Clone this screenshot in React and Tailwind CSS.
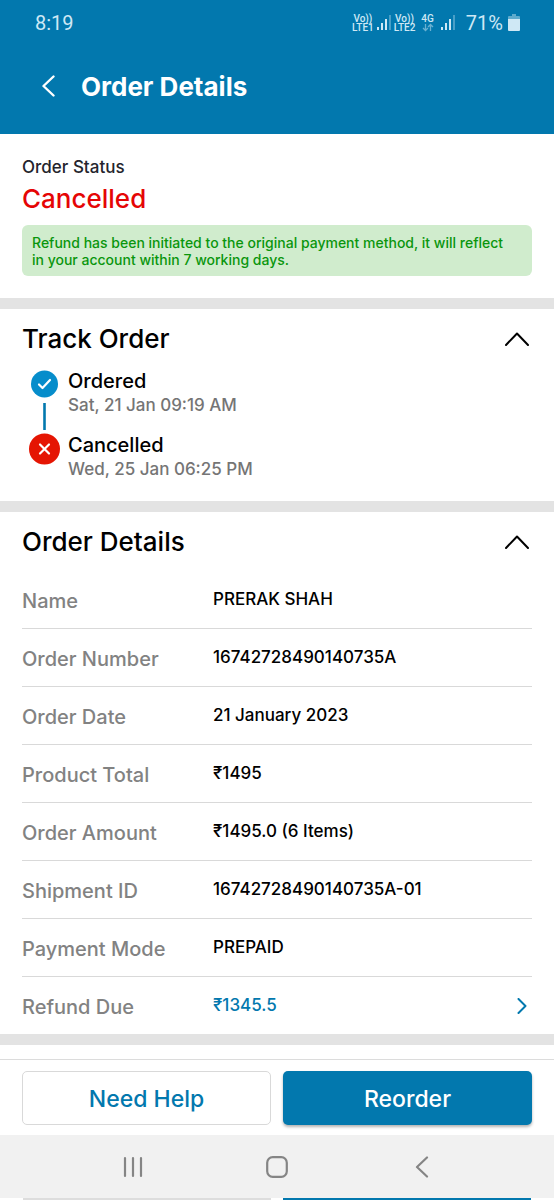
import { useState } from "react";

const details = [
  { label: "Name", value: "PRERAK SHAH" },
  { label: "Order Number", value: "16742728490140735A" },
  { label: "Order Date", value: "21 January 2023" },
  { label: "Product Total", value: "₹1495" },
  { label: "Order Amount", value: "₹1495.0 (6 Items)" },
  { label: "Shipment ID", value: "16742728490140735A-01" },
  { label: "Payment Mode", value: "PREPAID" },
];

function SignalBars() {
  return (
    <svg width="14" height="16" viewBox="0 0 14 16" aria-hidden="true" fill="#cfe8f5">
      <rect x="0" y="12" width="2" height="3" />
      <rect x="4" y="8" width="2" height="7" />
      <rect x="8" y="4" width="2" height="11" />
      <rect x="12" y="0" width="2" height="15" opacity="0.35" />
    </svg>
  );
}

function Volte({ line }) {
  return (
    <div className="flex flex-col items-center text-[10px] leading-[9px] font-medium">
      <span>Vo))</span>
      <span>{line}</span>
    </div>
  );
}

function StatusBar() {
  return (
    <div className="flex h-[46px] items-center justify-between pr-[34px] pl-[35px] font-['Roboto',sans-serif] text-[#cfe8f5]">
      <span className="text-xl">8:19</span>
      <div className="flex items-center">
        <Volte line="LTE1" />
        <span className="ml-[3px]"><SignalBars /></span>
        <span className="ml-[3px]"><Volte line="LTE2" /></span>
        <div className="ml-1.5 flex flex-col items-center text-[10px] leading-[9px] font-medium">
          <span>4G</span>
          <svg width="12" height="9" viewBox="0 0 12 9" aria-hidden="true" fill="none" stroke="#cfe8f5" strokeWidth="1.3" opacity="0.5">
            <path d="M3.5 1v6M1 5l2.5 2.5L6 5M8.5 8V2M6 4l2.5-2.5L11 4" />
          </svg>
        </div>
        <span className="ml-[7px]"><SignalBars /></span>
        <span className="ml-[11px] text-xl">71%</span>
        <svg className="ml-[5px]" width="12" height="18" viewBox="0 0 12 18" aria-hidden="true" fill="#cfe8f5">
          <path d="M4 0h4v2h3q1 0 1 1v3H0V3q0-1 1-1h3z" opacity="0.45" />
          <path d="M0 5h12v11q0 1-1 1H1q-1 0-1-1z" />
        </svg>
      </div>
    </div>
  );
}

function SectionHeading({ title, open, onToggle }) {
  return (
    <h2 className="text-[26px] leading-8 font-medium">
      <button type="button" aria-expanded={open} onClick={onToggle} className="flex w-full items-center justify-between pr-[3px] text-left">
        {title}
        <svg className={open ? "" : "rotate-180"} width="24" height="14" viewBox="0 0 24 14" aria-hidden="true" fill="none" stroke="currentColor" strokeWidth="2" strokeLinecap="round" strokeLinejoin="round">
          <path d="M1 13 12 1.5 23 13" />
        </svg>
      </button>
    </h2>
  );
}

function Step({ title, time, icon }) {
  return (
    <li className="flex gap-2">
      <div className="flex w-8 shrink-0 justify-center">{icon}</div>
      <div>
        <p className="text-xl leading-6 font-medium">{title}</p>
        <p className="text-[17px] leading-6 font-medium text-[#757575]">{time}</p>
      </div>
    </li>
  );
}

const rowClass = "grid w-full grid-cols-[191px_1fr] items-center text-left";
const labelClass = "pt-0.5 text-xl font-medium text-[#828282]";
const valueClass = "text-[17px] font-medium";

export default function App() {
  const [trackOpen, setTrackOpen] = useState(true);
  const [detailsOpen, setDetailsOpen] = useState(true);

  return (
    <div className="flex min-h-screen flex-col bg-white font-['Inter',sans-serif] text-black">
      <header className="bg-[#0278ae] pb-2 text-white">
        <StatusBar />
        <div className="flex h-20 items-center gap-[26px] px-[42px]">
          <button type="button" aria-label="Back">
            <svg width="13" height="22" viewBox="0 0 13 22" aria-hidden="true" fill="none" stroke="currentColor" strokeWidth="2.4" strokeLinecap="round" strokeLinejoin="round">
              <path d="M11.5 1.5 1.5 11l10 9.5" />
            </svg>
          </button>
          <h1 className="text-[26px] font-bold">Order Details</h1>
        </div>
      </header>

      <main className="flex-1">
        <section className="px-[22px] pt-[21px] pb-[22px]">
          <p className="text-[17px] leading-6 font-medium text-[#24242c]">Order Status</p>
          <p className="text-[26px] leading-10 font-medium text-[#e50505]">Cancelled</p>
          <p className="mt-[6px] rounded-[6px] bg-[#d0eccd] pt-[9px] pr-5 pb-2 pl-[10px] text-sm leading-[17px] font-medium text-[#0a960d]">
            Refund has been initiated to the original payment method, it will reflect in your account within 7 working days.
          </p>
        </section>

        <section className="border-t-[11px] border-[#e3e3e3] px-[22px] pt-[14px] pb-5">
          <SectionHeading title="Track Order" open={trackOpen} onToggle={() => setTrackOpen(!trackOpen)} />
          {trackOpen && (
            <ol className="flex flex-col gap-4 pt-[14px] pl-1.5">
              <Step
                title="Ordered"
                time="Sat, 21 Jan 09:19 AM"
                icon={
                  <svg className="-mb-4" width="32" height="64" viewBox="0 0 32 64" aria-hidden="true" fill="none">
                    <circle cx="16.5" cy="15" r="13.5" fill="#068dcb" />
                    <path d="m11 15.5 3.5 3.5 7.5-8" stroke="#fff" strokeWidth="2.2" strokeLinecap="round" strokeLinejoin="round" />
                    <path d="M16.5 34v27" stroke="#0278ae" strokeWidth="2.6" />
                  </svg>
                }
              />
              <Step
                title="Cancelled"
                time="Wed, 25 Jan 06:25 PM"
                icon={
                  <svg width="32" height="32" viewBox="0 0 32 32" aria-hidden="true" fill="none">
                    <circle cx="16.5" cy="16" r="15.5" fill="#e51503" />
                    <path d="m12 11.5 9 9m0-9-9 9" stroke="#fff" strokeWidth="2.2" strokeLinecap="round" />
                  </svg>
                }
              />
            </ol>
          )}
        </section>

        <section className="border-y-[11px] border-[#e3e3e3] px-[22px] pt-[14px]">
          <SectionHeading title="Order Details" open={detailsOpen} onToggle={() => setDetailsOpen(!detailsOpen)} />
          {detailsOpen && (
            <div className="pt-[13px]">
              <dl>
                {details.map(({ label, value }) => (
                  <div key={label} className={rowClass + " min-h-[58px] border-b border-[#d9d9d9]"}>
                    <dt className={labelClass}>{label}</dt>
                    <dd className={valueClass}>{value}</dd>
                  </div>
                ))}
              </dl>
              <button type="button" className={rowClass + " min-h-[57px] pr-[5px]"}>
                <span className={labelClass}>Refund Due</span>
                <span className="flex items-center justify-between text-[#0278ae]">
                  <span className={valueClass}>₹1345.5</span>
                  <svg width="10" height="16" viewBox="0 0 10 16" aria-hidden="true" fill="none" stroke="currentColor" strokeWidth="2" strokeLinecap="round" strokeLinejoin="round">
                    <path d="m1.5 1 7 7-7 7" />
                  </svg>
                </span>
              </button>
            </div>
          )}
        </section>
      </main>

      <footer>
        <div className="grid grid-cols-2 gap-3 border-t border-[#dcdcdc] px-[22px] pt-[11px] pb-[10px] text-[23px] font-medium">
          <button type="button" className="h-[54px] rounded-[5px] border border-[#d9d9d9] pt-0.5 text-[#0278ae]">Need Help</button>
          <button type="button" className="h-[54px] rounded-[5px] bg-[#0278ae] pt-0.5 text-white shadow-[0_2px_3px_rgba(0,0,0,0.3)]">Reorder</button>
        </div>
        <nav aria-label="System" className="flex h-[63px] items-center justify-between bg-[#f1f1f1] px-[122px] text-[#858585]">
          <button type="button" aria-label="Recent apps">
            <svg width="22" height="22" viewBox="0 0 22 22" aria-hidden="true" stroke="currentColor" strokeWidth="2.2" strokeLinecap="round">
              <path d="M3 2v18M11 2v18M19 2v18" />
            </svg>
          </button>
          <button type="button" aria-label="Home">
            <svg width="22" height="22" viewBox="0 0 22 22" aria-hidden="true" fill="none" stroke="currentColor" strokeWidth="2.2">
              <rect x="1.2" y="1.2" width="19.6" height="19.6" rx="5.5" />
            </svg>
          </button>
          <button type="button" aria-label="System back">
            <svg width="22" height="22" viewBox="0 0 22 22" aria-hidden="true" fill="none" stroke="currentColor" strokeWidth="2.2" strokeLinecap="round" strokeLinejoin="round">
              <path d="M17 1.5 7 11l10 9.5" />
            </svg>
          </button>
        </nav>
        <div className="grid h-0.5 grid-cols-2 gap-3 px-[23px]" aria-hidden="true">
          <div className="bg-[#dddddd]" />
          <div className="bg-[#0278ae]" />
        </div>
      </footer>
    </div>
  );
}
